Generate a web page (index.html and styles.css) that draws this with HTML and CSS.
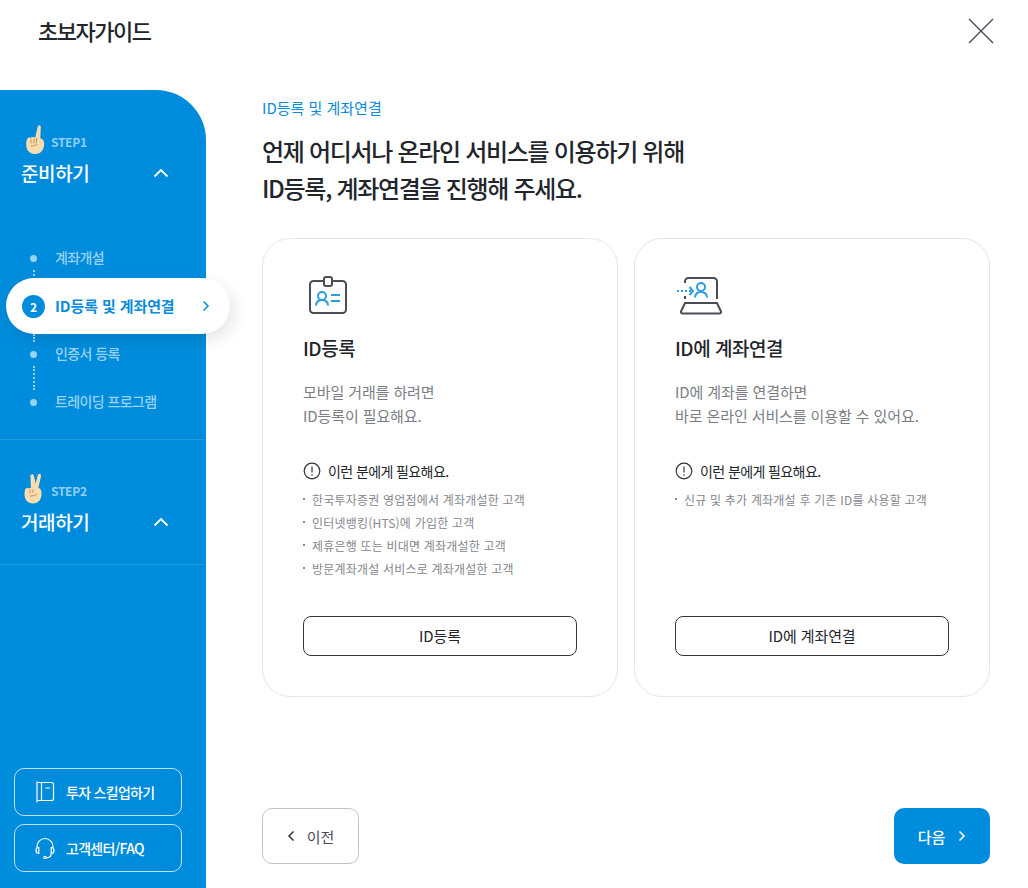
FILE: index.html
```html
<!doctype html>
<html lang="ko">
<head>
    <meta charset="utf-8">
    <title>초보자가이드</title>

    <link rel="stylesheet" href="styles.css">
</head>
<body>
    <header class="top-bar">
      <h1 class="top-title">초보자가이드</h1>
      <button class="btn-close" type="button" aria-label="닫기">
        <svg width="26" height="26" viewBox="0 0 26 26"><path d="M1 1 25 25M25 1 1 25" fill="none" stroke="#4a4d57" stroke-width="1.4"/></svg>
      </button>
    </header>

    <div class="layout">
      <aside class="sidebar">
        <section class="step step-first">
          <div class="step-head">
            <svg class="hand" width="26" height="32" viewBox="0 0 26 32">
              <path d="M15.500 1.500c1.300-.6 2.300.3 2.300 1.700l-.5 11c2.600.7 3.900 2.500 3.900 5.600 0 5.800-3.200 10.200-8.700 10.200-5.800 0-9.300-3.600-9.300-9.800 0-1.900.3-3.800 1-5.200.9-1.400 2.400-1.900 3.400-1.100.9-.9 2.300-1.100 3.300-.3.400-.3.900-.5 1.500-.5L14.600 3c0-.6.300-1.200.9-1.500z" fill="#fbdcb0"/>
              <path d="M8 15v4M11 15v4M13.500 14.500v4.500M8 22c2 .2 4-.3 6-1.500" fill="none" stroke="#c98f52" stroke-width="1" stroke-linecap="round"/>
            </svg>
            <span class="step-num">STEP1</span>
          </div>
          <div class="step-row">
            <h2 class="step-title">준비하기</h2>
            <svg width="16" height="10" viewBox="0 0 16 10"><path d="M1.500 8.500 8 2l6.500 6.500" fill="none" stroke="#fff" stroke-width="1.800"/></svg>
          </div>
          <ul class="nav">
            <li class="nav-item"><span class="nav-dot"></span><span class="nav-text">계좌개설</span></li>
            <li class="nav-item active">
              <span class="nav-num">2</span>
              <span class="nav-label">ID등록 및 계좌연결</span>
              <svg width="8" height="12" viewBox="0 0 8 12"><path d="M1.500 1.500 6 6l-4.500 4.500" fill="none" stroke="#0a8cdb" stroke-width="1.500"/></svg>
            </li>
            <li class="nav-item"><span class="nav-dot"></span><span class="nav-text">인증서 등록</span></li>
            <li class="nav-item"><span class="nav-dot"></span><span class="nav-text">트레이딩 프로그램</span></li>
          </ul>
        </section>

        <section class="step step-second">
          <div class="step-head">
            <svg class="hand" width="26" height="32" viewBox="0 0 26 32">
              <path d="M8.500 1.500c1-.5 2 .1 2.300 1.100l2 8 1.900-8.300c.2-1 1.200-1.500 2.100-1.200 1 .3 1.400 1.200 1.200 2.200l-2.600 11.500c2.100.9 3.200 2.700 3.200 5.400 0 6-3.200 10.300-8.400 10.300-5.500 0-8.700-3.600-8.700-9.500 0-2.600.5-4.700 1.500-5.500.9-.7 1.900-.6 2.800 0 .6-.5 1.400-.6 2.100-.4L7.500 3.700c-.3-1 .1-1.800 1-2.200z" fill="#fbdcb0"/>
              <path d="M7 17v3M10 16.500v3M7 23c2.500.2 5-.4 7-2" fill="none" stroke="#c98f52" stroke-width="1" stroke-linecap="round"/>
            </svg>
            <span class="step-num">STEP2</span>
          </div>
          <div class="step-row">
            <h2 class="step-title">거래하기</h2>
            <svg width="16" height="10" viewBox="0 0 16 10"><path d="M1.500 8.500 8 2l6.500 6.500" fill="none" stroke="#fff" stroke-width="1.800"/></svg>
          </div>
        </section>

        <div class="side-links">
          <a class="side-link">
            <svg width="20" height="22" viewBox="0 0 20 22" fill="none" stroke="#fff" stroke-width="1.200"><path d="M2 1.500h14.500a2 2 0 0 1 2 2v14a2 2 0 0 1-2 2H2zM6.500 1.500v18M2 .5v21M10.500 7h4.500"/></svg>
            투자 스킬업하기
          </a>
          <a class="side-link">
            <svg width="20" height="22" viewBox="0 0 20 22" fill="none" stroke="#fff" stroke-width="1.200"><path d="M2 11V9.500a8 8 0 0 1 16 0V11M3.800 10.500C1.800 10.500 1 12 1 13.500s.8 3 2.800 3zM16.200 10.500c2 0 2.800 1.500 2.800 3s-.8 3-2.800 3zM16.200 16.500c0 2.700-2 4.300-5 4.300"/><circle cx="10" cy="20.500" r="1.200"/></svg>
            고객센터/FAQ
          </a>
        </div>
      </aside>

      <main class="content">
        <p class="crumb">ID등록 및 계좌연결</p>
        <h2 class="headline">언제 어디서나 온라인 서비스를 이용하기 위해<br>ID등록, 계좌연결을 진행해 주세요.</h2>

        <div class="cards">
          <article class="card">
            <svg class="card-icon" width="40" height="40" viewBox="0 0 40 40" fill="none" stroke-width="2">
              <path d="M15 6H5.500A3.500 3.500 0 0 0 2 9.500v25A3.500 3.500 0 0 0 5.500 38h29a3.500 3.500 0 0 0 3.500-3.500v-25A3.500 3.500 0 0 0 34.500 6H25" stroke="#4a4d57"/>
              <rect x="16" y="2" width="8" height="9" rx="2" stroke="#4a4d57"/>
              <circle cx="14" cy="21" r="4" stroke="#2b9ede"/>
              <path d="M8 30.500c.3-3.800 2.800-5.500 6-5.500s5.700 1.700 6 5.500M23 20h9M23 26h9" stroke="#2b9ede"/>
            </svg>
            <h3 class="card-title">ID등록</h3>
            <p class="card-desc">모바일 거래를 하려면<br>ID등록이 필요해요.</p>
            <p class="notice">
              <svg width="18" height="18" viewBox="0 0 18 18" fill="none" stroke="#33353d" stroke-width="1.200"><circle cx="9" cy="9" r="7.800"/><path d="M9 4.500v6M9 12.200v1.500"/></svg>
              이런 분에게 필요해요.
            </p>
            <ul class="who">
              <li>한국투자증권 영업점에서 계좌개설한 고객</li>
              <li>인터넷뱅킹(HTS)에 가입한 고객</li>
              <li>제휴은행 또는 비대면 계좌개설한 고객</li>
              <li>방문계좌개설 서비스로 계좌개설한 고객</li>
            </ul>
            <button class="card-btn" type="button">ID등록</button>
          </article>

          <article class="card">
            <svg class="card-icon card-icon-laptop" width="48" height="40" viewBox="0 0 48 40" fill="none" stroke-width="2">
              <path d="M9 8V6.500A3.500 3.500 0 0 1 12.500 3h25A3.500 3.500 0 0 1 41 6.500V24M9 21v3" stroke="#4a4d57"/>
              <path d="M9 28h32l4 8.500a1.500 1.500 0 0 1-1.500 2h-37a1.500 1.500 0 0 1-1.500-2z" stroke="#4a4d57"/>
              <circle cx="25" cy="12" r="4" stroke="#2b9ede"/>
              <path d="M19 22.500c.3-3.800 2.800-5.500 6-5.500s5.700 1.700 6 5.500M13.500 12l3.500 4-3.500 4" stroke="#2b9ede"/>
              <path d="M1 16h14" stroke="#2b9ede" stroke-dasharray="2 2"/>
            </svg>
            <h3 class="card-title">ID에 계좌연결</h3>
            <p class="card-desc">ID에 계좌를 연결하면<br>바로 온라인 서비스를 이용할 수 있어요.</p>
            <p class="notice">
              <svg width="18" height="18" viewBox="0 0 18 18" fill="none" stroke="#33353d" stroke-width="1.200"><circle cx="9" cy="9" r="7.800"/><path d="M9 4.500v6M9 12.200v1.500"/></svg>
              이런 분에게 필요해요.
            </p>
            <ul class="who">
              <li>신규 및 추가 계좌개설 후 기존 ID를 사용할 고객</li>
            </ul>
            <button class="card-btn" type="button">ID에 계좌연결</button>
          </article>
        </div>

        <div class="pager">
          <button class="btn-prev" type="button">
            <svg width="8" height="12" viewBox="0 0 8 12"><path d="M6.500 1.500 2 6l4.500 4.500" fill="none" stroke="#33353d" stroke-width="1.500"/></svg>
            이전
          </button>
          <button class="btn-next" type="button">
            다음
            <svg width="8" height="12" viewBox="0 0 8 12"><path d="M1.500 1.500 6 6l-4.500 4.500" fill="none" stroke="#fff" stroke-width="1.500"/></svg>
          </button>
        </div>
      </main>
    </div>
</body>
</html>
```

FILE: styles.css
```css
* {
  margin: 0;
  padding: 0;
  box-sizing: border-box;
}
body {
  width: 1028px;
  height: 888px;
  overflow: hidden;
  background-color: #fff;
  color: #23252c;
  font-family: "Noto Sans CJK KR", "Noto Sans", sans-serif;
}
ul {
  list-style: none;
}
button {
  font-family: inherit;
  background: none;
  cursor: pointer;
}
.top-bar {
  height: 90px;
  padding: 14px 34px 0 38px;
  display: flex;
  justify-content: space-between;
  align-items: flex-start;
}
.top-title {
  font-size: 22px;
  line-height: 32px;
  font-weight: 500;
  letter-spacing: -1.5px;
}
.btn-close {
  border: none;
  height: 26px;
  margin-top: 4px;
}
.layout {
  height: 798px;
  display: flex;
}

/* sidebar */
.sidebar {
  width: 206px;
  background-color: #008cdc;
  border-top-right-radius: 50px;
  display: flex;
  flex-direction: column;
  color: #fff;
}
.step {
  padding: 33px 0 0 21px;
  border-bottom: 1px solid #1f9ae0;
}
.step-first {
  height: 350px;
}
.step-second {
  height: 125px;
  padding-top: 32px;
}
.step-head {
  display: flex;
  align-items: flex-end;
  height: 33px;
}
.hand {
  display: block;
  margin-left: 2px;
}
.step-num {
  font-size: 12px;
  line-height: 16px;
  font-weight: 700;
  letter-spacing: -.3px;
  color: #8fd0f4;
  margin: 0 0 6px 2px;
}
.step-row {
  width: 148px;
  margin-top: 3px;
  display: flex;
  justify-content: space-between;
  align-items: center;
}
.step-title {
  font-size: 19px;
  line-height: 28px;
  font-weight: 500;
  letter-spacing: -.4px;
}
.nav {
  margin-top: 47px;
}
.nav-item {
  position: relative;
  height: 48px;
  padding-left: 34px;
  display: flex;
  align-items: center;
  font-size: 14px;
  font-weight: 500;
  letter-spacing: -.6px;
  color: #99d3f3;
}
.nav-text {
  margin-top: -2px;
}
.nav-dot {
  width: 7px;
  height: 7px;
  margin-left: -25px;
  margin-right: 18px;
  border-radius: 50%;
  background-color: #99d3f3;
}
.nav-item:first-child::after,
.nav-item:nth-child(3)::before,
.nav-item:nth-child(3)::after {
  content: "";
  position: absolute;
  left: 12px;
  border-left: 2px dotted #99d3f3;
}
.nav-item:first-child::after {
  top: 36px;
  height: 10px;
}
.nav-item:nth-child(3)::before {
  top: 4px;
  height: 8px;
}
.nav-item:nth-child(3)::after {
  top: 36px;
  height: 24px;
}
.nav-item.active {
  z-index: 1;
  width: 224px;
  height: 56px;
  margin: -4px 0 -4px -15px;
  padding: 0 20px 0 16px;
  border-radius: 28px;
  background-color: #fff;
  box-shadow: 4px 6px 16px rgba(0, 0, 0, .1);
  color: #0a8cdb;
  font-size: 15px;
  font-weight: 700;
  letter-spacing: -.1px;
  justify-content: space-between;
}
.nav-num {
  width: 23px;
  height: 23px;
  border-radius: 50%;
  background-color: #008cdc;
  color: #fff;
  font-size: 12px;
  font-weight: 700;
  text-align: center;
  line-height: 23px;
  letter-spacing: 0;
}
.nav-label {
  flex: 1;
  margin: -2px 0 0 10px;
}
.side-links {
  margin-top: auto;
  padding: 0 24px 16px 14px;
  display: flex;
  flex-direction: column;
  gap: 8px;
}
.side-link {
  height: 48px;
  padding-left: 20px;
  border: 1px solid #bfe3f7;
  border-radius: 10px;
  display: flex;
  align-items: center;
  gap: 11px;
  font-size: 14px;
  font-weight: 500;
  letter-spacing: -.7px;
}

/* content */
.content {
  flex: 1;
  padding: 7px 38px 0 56px;
  display: flex;
  flex-direction: column;
}
.crumb {
  font-size: 15px;
  line-height: 22px;
  letter-spacing: 0;
  color: #0a8cdb;
}
.headline {
  margin-top: 13px;
  font-size: 24px;
  line-height: 37px;
  font-weight: 500;
  letter-spacing: -1.3px;
}
.cards {
  margin-top: 32px;
  display: flex;
  gap: 16px;
}
.card {
  width: 356px;
  height: 459px;
  padding: 36px 40px 40px;
  border: 1px solid #e6e6e6;
  border-radius: 28px;
  display: flex;
  flex-direction: column;
}
.card-icon {
  display: block;
  margin-left: 5px;
  align-self: flex-start;
}
.card-icon-laptop {
  margin-left: 1px;
}
.card-title {
  margin-top: 19px;
  font-size: 19px;
  line-height: 28px;
  font-weight: 500;
  letter-spacing: -.5px;
}
.card-desc {
  margin-top: 18px;
  font-size: 15px;
  line-height: 24px;
  letter-spacing: -.1px;
  color: #7b7d84;
}
.notice {
  margin-top: 32px;
  display: flex;
  align-items: center;
  gap: 7px;
  font-size: 14px;
  line-height: 22px;
  letter-spacing: -.6px;
}
.who {
  margin-top: 6px;
}
.who li {
  position: relative;
  padding-left: 9px;
  font-size: 12px;
  line-height: 23px;
  letter-spacing: .2px;
  color: #85878e;
}
.who li::before {
  content: "";
  position: absolute;
  left: 0;
  top: 10px;
  width: 2px;
  height: 2px;
  background-color: #85878e;
}
.card-btn {
  margin-top: auto;
  padding-bottom: 2px;
  height: 40px;
  border: 1px solid #33353d;
  border-radius: 8px;
  font-size: 15px;
  letter-spacing: -.1px;
  color: #23252c;
}
.pager {
  margin-top: 111px;
  display: flex;
  justify-content: space-between;
}
.btn-prev,
.btn-next {
  height: 56px;
  border-radius: 10px;
  display: flex;
  align-items: center;
  justify-content: center;
  font-size: 15px;
}
.btn-prev {
  width: 97px;
  gap: 12px;
  border: 1px solid #c4c4c4;
  color: #4a4d57;
}
.btn-next {
  width: 96px;
  gap: 13px;
  border: none;
  background-color: #008cdc;
  color: #fff;
  font-weight: 500;
}
```
